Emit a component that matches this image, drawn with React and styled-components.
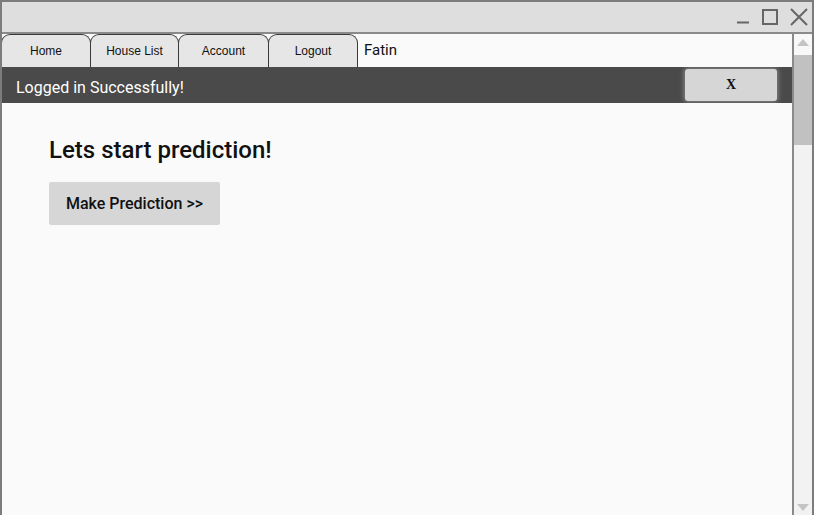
import React, { useState } from 'react'
import styled, { createGlobalStyle } from 'styled-components'

const GlobalStyle = createGlobalStyle`
  html, body {
    margin: 0;
    padding: 0;
    background: #fafafa;
  }
  * { box-sizing: border-box; }
`

const Frame = styled.div`
  width: 814px;
  height: 515px;
  border: 2px solid #7c7c7c;
  border-bottom: none;
  display: flex;
  flex-direction: column;
  overflow: hidden;
  background: #fafafa;
`

const TitleBar = styled.div`
  height: 32px;
  background: #dedede;
  border-bottom: 2px solid #8a8a8a;
  display: flex;
  align-items: center;
  justify-content: flex-end;
  gap: 12px;
  padding-right: 4px;
  flex-shrink: 0;
`

const Body = styled.div`
  flex: 1;
  display: flex;
  min-height: 0;
`

const Main = styled.div`
  flex: 1;
  display: flex;
  flex-direction: column;
`

const TabRow = styled.div`
  height: 33px;
  display: flex;
  align-items: flex-end;
  margin-left: -1px;
`

const Tab = styled.div`
  width: ${(p) => p.w}px;
  height: 33px;
  margin-right: -1px;
  background: #e6e6e6;
  border: 1px solid #3a3a3a;
  border-bottom: none;
  border-radius: 9px 9px 0 0;
  display: flex;
  align-items: center;
  justify-content: center;
  font-family: "Liberation Sans", Arial, sans-serif;
  font-size: 12px;
  color: #111;
`

const UserName = styled.div`
  align-self: stretch;
  padding: 7px 0 0 7px;
  font-family: "Roboto", "Liberation Sans", sans-serif;
  font-size: 15px;
  color: #111;
`

const AlertBar = styled.div`
  height: 36px;
  background: #4a4a4a;
  display: flex;
  align-items: center;
  justify-content: space-between;
  padding: 0 15px 0 14px;
`

const AlertText = styled.span`
  color: #fff;
  font-family: "Roboto", "Liberation Sans", sans-serif;
  font-size: 16px;
  padding-top: 4px;
`

const CloseButton = styled.button`
  width: 92px;
  height: 32px;
  background: #d6d6d6;
  border: none;
  border-radius: 3px;
  box-shadow: 0 0 5px 1px rgba(255, 255, 255, 0.35);
  font-family: "Liberation Serif", "Times New Roman", serif;
  font-weight: bold;
  font-size: 14px;
  color: #111;
  cursor: pointer;
`

const Content = styled.div`
  flex: 1;
  padding: 31px 0 0 47px;
  display: flex;
  flex-direction: column;
  align-items: flex-start;
`

const Heading = styled.h1`
  margin: 0 0 16px 0;
  font-family: "Roboto", "Liberation Sans", sans-serif;
  font-weight: 500;
  font-size: 24px;
  color: #111;
  line-height: 32px;
`

const ActionButton = styled.button`
  width: 171px;
  height: 43px;
  background: #d6d6d6;
  border: none;
  border-radius: 2px;
  font-family: "Roboto", "Liberation Sans", sans-serif;
  font-weight: 500;
  font-size: 16px;
  color: #111;
  cursor: pointer;
`

const ScrollBar = styled.div`
  width: 20px;
  border-left: 2px solid #8a8a8a;
  background: #f2f2f2;
  display: flex;
  flex-direction: column;
  align-items: center;
`

const ArrowBox = styled.div`
  height: ${(p) => p.h}px;
  width: 100%;
  display: flex;
  justify-content: center;
  align-items: ${(p) => (p.down ? 'flex-end' : 'flex-start')};
  padding: ${(p) => (p.down ? '0 0 4px 0' : '5px 0 0 0')};
  background: ${(p) => (p.down ? 'transparent' : '#f8f8f8')};
`

const Thumb = styled.div`
  width: 100%;
  height: 90px;
  background: #c1c1c1;
`

const Track = styled.div`
  flex: 1;
`

export default function App() {
  const [showAlert, setShowAlert] = useState(true)
  return (
    <>
      <GlobalStyle />
      <Frame>
        <TitleBar>
          <svg width="14" height="16" viewBox="0 0 14 16">
            <line x1="1" y1="13.5" x2="13" y2="13.5" stroke="#666" strokeWidth="2" />
          </svg>
          <svg width="16" height="16" viewBox="0 0 16 16">
            <rect x="1" y="1" width="14" height="14" fill="none" stroke="#666" strokeWidth="2" />
          </svg>
          <svg width="18" height="18" viewBox="0 0 18 18">
            <path d="M1 1 L17 17 M17 1 L1 17" stroke="#666" strokeWidth="2" />
          </svg>
        </TitleBar>
        <Body>
          <Main>
            <TabRow>
              <Tab w={90}>Home</Tab>
              <Tab w={89}>House List</Tab>
              <Tab w={91}>Account</Tab>
              <Tab w={90}>Logout</Tab>
              <UserName>Fatin</UserName>
            </TabRow>
            {showAlert && (
              <AlertBar>
                <AlertText>Logged in Successfully!</AlertText>
                <CloseButton onClick={() => setShowAlert(false)}>X</CloseButton>
              </AlertBar>
            )}
            <Content>
              <Heading>Lets start prediction!</Heading>
              <ActionButton>Make Prediction &gt;&gt;</ActionButton>
            </Content>
          </Main>
          <ScrollBar>
            <ArrowBox h={21}>
              <svg width="12" height="7" viewBox="0 0 12 7">
                <path d="M0 7 L6 0 L12 7 Z" fill="#c4c4c4" />
              </svg>
            </ArrowBox>
            <Thumb />
            <Track />
            <ArrowBox h={16} down>
              <svg width="12" height="7" viewBox="0 0 12 7">
                <path d="M0 0 L6 7 L12 0 Z" fill="#c4c4c4" />
              </svg>
            </ArrowBox>
          </ScrollBar>
        </Body>
      </Frame>
    </>
  )
}
